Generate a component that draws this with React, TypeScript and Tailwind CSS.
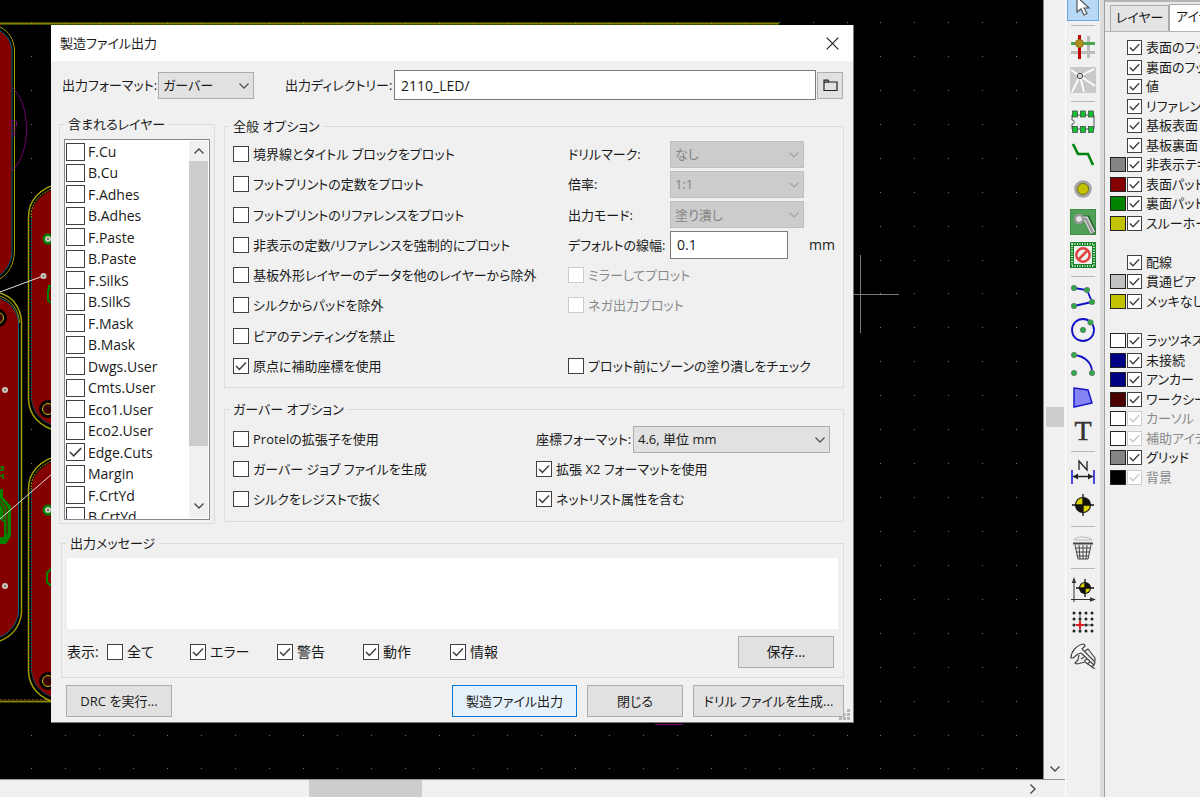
import React, { useId } from "react";

const FONT =
  "font-['Open_Sans','Noto_Sans_CJK_JP',sans-serif] [font-feature-settings:'palt']";

function Check({
  label,
  checked = false,
  disabled = false,
  variant = "form",
}: {
  label: string;
  checked?: boolean;
  disabled?: boolean;
  variant?: "form" | "list" | "panel";
}) {
  const size =
    variant === "list" ? "h-[18px] w-[19px]" : variant === "panel" ? "size-[15px]" : "size-4";
  const gap = variant === "list" ? "gap-[3px]" : "gap-1";
  return (
    <label
      className={`flex items-center whitespace-nowrap ${gap} ${disabled ? "text-[#8a8a8a]" : "text-[#1a1a1a]"}`}
    >
      <span className={`relative shrink-0 ${size}`}>
        <input
          type="checkbox"
          defaultChecked={checked}
          disabled={disabled}
          className={`peer block size-full appearance-none border bg-white ${disabled ? "border-[#cccccc]" : "border-[#404040]"}`}
        />
        <svg
          viewBox="0 0 16 16"
          className={`pointer-events-none absolute inset-0 hidden size-full peer-checked:block ${disabled ? "text-[#c8c8c8]" : "text-[#404040]"}`}
          fill="none"
          stroke="currentColor"
          strokeWidth="1.5"
        >
          <path d="M3 8l3.4 3.4L13 4.6" />
        </svg>
      </span>
      <span>{label}</span>
    </label>
  );
}

function Chevron({ className = "" }: { className?: string }) {
  return (
    <svg viewBox="0 0 12 8" className={`h-2 w-3 ${className}`} fill="none" stroke="currentColor">
      <path d="M1.500 1.500L6 6l4.500-4.500" strokeWidth="1.300" />
    </svg>
  );
}

function Drop({
  id,
  value,
  width,
  disabled = false,
}: {
  id: string;
  value: string;
  width: string;
  disabled?: boolean;
}) {
  return (
    <span className={`relative block shrink-0 ${width}`}>
      <select
        id={id}
        disabled={disabled}
        defaultValue={value}
        className={`block h-[27px] w-full appearance-none border pl-1 pr-5 leading-5 opacity-100 ${disabled ? "border-[#bfbfbf] bg-[#cccccc] text-[#838383]" : "border-[#adadad] bg-[#e1e1e1] text-[#1a1a1a]"}`}
      >
        <option>{value}</option>
      </select>
      <Chevron
        className={`pointer-events-none absolute right-1 top-[10px] ${disabled ? "text-[#a6a6a6]" : "text-[#555]"}`}
      />
    </span>
  );
}

function Group({
  title,
  className = "",
  inner = "",
  children,
}: {
  title: string;
  className?: string;
  inner?: string;
  children: React.ReactNode;
}) {
  return (
    <fieldset className={`min-w-0 border border-[#dcdcdc] ${className}`}>
      <legend className="ml-1 px-1 leading-5">{title}</legend>
      <div className={inner}>{children}</div>
    </fieldset>
  );
}

function PushButton({
  children,
  width,
  primary = false,
}: {
  children: React.ReactNode;
  width: string;
  primary?: boolean;
}) {
  return (
    <button
      type="button"
      className={`h-8 shrink-0 whitespace-nowrap border ${width} ${primary ? "border-[#0078d7] bg-[#e5f1fb]" : "border-[#adadad] bg-[#e1e1e1]"}`}
    >
      {children}
    </button>
  );
}

const layers = [
  "F.Cu", "B.Cu", "F.Adhes", "B.Adhes", "F.Paste", "B.Paste", "F.SilkS", "B.SilkS", "F.Mask",
  "B.Mask", "Dwgs.User", "Cmts.User", "Eco1.User", "Eco2.User", "Edge.Cuts", "Margin", "F.CrtYd",
  "B.CrtYd",
];

const plotOptions: [string, boolean][] = [
  ["境界線とタイトル ブロックをプロット", false],
  ["フットプリントの定数をプロット", false],
  ["フットプリントのリファレンスをプロット", false],
  ["非表示の定数/リファレンスを強制的にプロット", false],
  ["基板外形レイヤーのデータを他のレイヤーから除外", false],
  ["シルクからパッドを除外", false],
  ["ビアのテンティングを禁止", false],
  ["原点に補助座標を使用", true],
];

function PlotDialog() {
  const id = useId();
  return (
    <section
      role="dialog"
      aria-label="製造ファイル出力"
      className="absolute left-[51px] top-[25px] flex w-[803px] flex-col border-b border-r border-[#777] bg-[#f0f0f0] pb-[5px] text-[13px]"
    >
      <header className="flex h-9 items-center justify-between bg-white pl-[9px] pr-[14px]">
        <h1>製造ファイル出力</h1>
        <button type="button" aria-label="閉じる">
          <svg viewBox="0 0 13 13" className="size-[13px]" stroke="#222" strokeWidth="1.200">
            <path d="M.7.7l11.600 11.600M12.300.7L.7 12.300" />
          </svg>
        </button>
      </header>

      <div className="flex h-12 items-center pl-[11px] pr-[10px]">
        <label htmlFor={id + "f"} className="w-[96px] shrink-0 whitespace-nowrap">出力フォーマット:</label>
        <Drop id={id + "f"} value="ガーバー" width="w-[96px]" />
        <label htmlFor={id + "d"} className="ml-[31px] w-[109px] shrink-0 whitespace-nowrap">出力ディレクトリー:</label>
        <input
          id={id + "d"}
          defaultValue="2110_LED/"
          className="h-[30px] min-w-0 flex-1 border border-[#7a7a7a] bg-white px-[6px] text-[14px]"
        />
        <button
          type="button"
          aria-label="参照"
          className="ml-px flex h-[27px] w-[26px] items-center justify-center border border-[#adadad] bg-[#e1e1e1]"
        >
          <svg viewBox="0 0 15 13" className="h-[13px] w-[15px]" fill="none" stroke="#222" strokeWidth="1.200">
            <path d="M1 11.500V1.200h4l1.200 1.800H14v8.500zM1 3.200h5" />
          </svg>
        </button>
      </div>

      <div className="flex gap-[9px] pl-2 pr-[9px] pt-[5px]">
        <Group title="含まれるレイヤー" className="w-[156px] shrink-0" inner="px-1 pb-[3px]">
          <div className="mt-[5px] flex h-[381px] overflow-hidden border border-[#828790] bg-white">
            <ul className="flex h-[387px] min-w-0 flex-1 flex-col justify-between pl-px pt-px text-[14px]">
              {layers.map((l) => (
                <li key={l} className="h-[21px] leading-[21px]">
                  <Check label={l} checked={l === "Edge.Cuts"} variant="list" />
                </li>
              ))}
            </ul>
            <div className="m-px flex w-[19px] flex-col items-center bg-[#f0f0f0] text-[#444]">
              <Chevron className="my-[6px] shrink-0 rotate-180" />
              <div className="h-[285px] w-full bg-[#cdcdcd]" />
              <Chevron className="mb-2 mt-auto shrink-0" />
            </div>
          </div>
        </Group>

        <div className="flex min-w-0 flex-1 flex-col gap-[11px] pt-[2px]">
          <Group title="全般 オプション" inner="pb-[7px] pl-2">
            <div className="mt-1 flex h-[240px]">
              <div className="flex w-[335px] shrink-0 flex-col justify-between">
                {plotOptions.map(([label, on]) => (
                  <div key={label} className="flex h-7 items-center">
                    <Check label={label} checked={on} />
                  </div>
                ))}
              </div>
              <div className="flex flex-1 flex-col justify-between">
                {[
                  ["ドリルマーク:", "なし"],
                  ["倍率:", "1:1"],
                  ["出力モード:", "塗り潰し"],
                ].map(([label, value]) => (
                  <div key={label} className="flex h-7 items-center">
                    <label htmlFor={id + label} className="w-[102px] shrink-0 whitespace-nowrap">{label}</label>
                    <Drop id={id + label} value={value} width="w-[134px]" disabled />
                  </div>
                ))}
                <div className="flex h-7 items-center">
                  <label htmlFor={id + "w"} className="w-[102px] shrink-0 whitespace-nowrap">デフォルトの線幅:</label>
                  <input
                    id={id + "w"}
                    defaultValue="0.1"
                    className="h-7 w-[118px] border border-[#7a7a7a] bg-white px-[6px] text-[14px]"
                  />
                  <span className="ml-[21px] text-[14px]">mm</span>
                </div>
                <div className="flex h-7 items-center">
                  <Check label="ミラーしてプロット" disabled />
                </div>
                <div className="flex h-7 items-center">
                  <Check label="ネガ出力プロット" disabled />
                </div>
                <div className="h-7" />
                <div className="flex h-7 items-center">
                  <Check label="プロット前にゾーンの塗り潰しをチェック" />
                </div>
              </div>
            </div>
          </Group>

          <Group title="ガーバー オプション" inner="pb-[6px] pl-2">
            <div className="mt-[6px] flex h-[90px]">
              <div className="flex w-[303px] shrink-0 flex-col gap-[2px]">
                {["Protelの拡張子を使用", "ガーバー ジョブ ファイルを生成", "シルクをレジストで抜く"].map((l) => (
                  <div key={l} className="flex h-7 items-center">
                    <Check label={l} />
                  </div>
                ))}
              </div>
              <div className="flex flex-1 flex-col gap-[2px]">
                <div className="flex h-7 items-center">
                  <label htmlFor={id + "c"} className="w-[97px] shrink-0 whitespace-nowrap">座標フォーマット:</label>
                  <Drop id={id + "c"} value="4.6, 単位 mm" width="w-[197px]" />
                </div>
                <div className="flex h-7 items-center">
                  <Check label="拡張 X2 フォーマットを使用" checked />
                </div>
                <div className="flex h-7 items-center">
                  <Check label="ネットリスト属性を含む" checked />
                </div>
              </div>
            </div>
          </Group>
        </div>
      </div>

      <Group title="出力メッセージ" className="ml-[10px] mr-[9px] mt-[9px]" inner="px-[5px] pb-[9px]">
        <textarea
          aria-label="出力メッセージ"
          className="mt-[5px] block h-[71px] w-full resize-none bg-white"
        />
        <div className="mt-[7px] flex h-8 items-center text-[14px]">
          <span className="w-[40px] shrink-0">表示:</span>
          <div className="w-[83px]"><Check label="全て" /></div>
          <div className="w-[87px]"><Check label="エラー" checked /></div>
          <div className="w-[86px]"><Check label="警告" checked /></div>
          <div className="w-[87px]"><Check label="動作" checked /></div>
          <Check label="情報" checked />
          <div className="ml-auto mr-1">
            <PushButton width="w-24">保存...</PushButton>
          </div>
        </div>
      </Group>

      <footer className="mt-[7px] flex gap-[10px] pl-[15px] pr-[9px]">
        <PushButton width="w-[106px]">DRC を実行...</PushButton>
        <div className="flex-1" />
        <PushButton width="w-[125px]" primary>製造ファイル出力</PushButton>
        <PushButton width="w-24">閉じる</PushButton>
        <PushButton width="w-[151px]">ドリル ファイルを生成...</PushButton>
      </footer>
      <svg className="absolute bottom-px right-[2px] size-3" fill="#b5b5b5">
        {[[8, 0], [4, 4], [8, 4], [0, 8], [4, 8], [8, 8]].map(([x, y]) => (
          <rect key={`${x}-${y}`} x={x} y={y} width="3" height="3" />
        ))}
      </svg>
    </section>
  );
}

function Pad({ x, y, ring = false }: { x: number; y: number; ring?: boolean }) {
  return (
    <g>
      {ring && <circle cx={x} cy={y} r="5.500" fill="#008400" />}
      <circle cx={x} cy={y} r="3" fill="#c9c9c9" />
      <circle cx={x} cy={y} r="1.200" fill="#8a7a50" />
    </g>
  );
}

function Hole({ x, y }: { x: number; y: number }) {
  return (
    <g>
      <circle cx={x} cy={y} r="9" fill="#000" />
      <circle cx={x} cy={y} r="5.500" fill="#3a0000" stroke="#c2c200" />
    </g>
  );
}

function Board() {
  const dots = [];
  for (let i = 0; i < 30; i++)
    for (let j = 0; j < 23; j++)
      dots.push(
        <rect key={`${i}-${j}`} x={Math.round(31 + i * 33.98)} y={Math.round(22 + j * 33.93)} width="1" height="1" />
      );
  const red = "#840000";
  const olive = "#a0a000";
  return (
    <svg className="absolute inset-0 size-full" fill="none">
      <g fill="#777">{dots}</g>
      <path d="M0 23.500H779" stroke="#848400" strokeWidth="2" />
      <path d="M0 24.500H779" stroke="#a03000" strokeDasharray="1 3" />
      <path d="M2 24.500H779" stroke="#008400" strokeDasharray="1 3" />
      <path d="M0 701.500H60" stroke="#848400" strokeWidth="2" />
      <path d="M0 699.500H60" stroke="#843000" strokeDasharray="2 2" />

      <path d="M0 31C7 35 11 42 11.500 50V252C11 262 7 270 0 275z" fill={red} />
      <path d="M0 31C7 35 11.500 42 12 50V252C11.500 262 7 270 0 275" stroke="#006878" />
      <path d="M0 27C9 31 14 40 14.500 50V252C14 264 9 273 0 279" stroke={olive} />
      <path d="M12 87C22 97 26.500 112 26.500 129S22 161 12 171" stroke="#700070" />
      <path d="M11.500 121h5v5h-5zM11.500 129h5M11.500 134h5M14 131v6" stroke="#700070" />

      <path d="M0 298C11 302 18 312 18.500 324V613C17 624 10 633 0 637z" fill={red} />
      <path d="M0 298C11 302 18 312 18.500 324V613C17 624 10 633 0 637" stroke="#006878" />
      <path d="M0 293C13 297 21 308 21.500 322V613C20 626 12 636 0 641" stroke={olive} strokeWidth="1.500" />
      <path d="M0 296C11 300 19 310 19.500 323" stroke={olive} />

      {[[185, 430], [457, 702]].map(([t, b]) => (
        <g key={t}>
          <path d={`M60 ${t + 2}C42 ${t + 7} 32 ${t + 18} 31 ${t + 32}V${b - 33}C32 ${b - 18} 42 ${b - 6} 60 ${b - 3}z`} fill={red} />
          <path d={`M31.500 ${t + 32}V${b - 33}C32 ${b - 18} 42 ${b - 6} 60 ${b - 3}`} stroke="#006878" strokeDasharray="2 1" />
          <path d={`M60 ${t - 2}C40 ${t + 3} 28.500 ${t + 15} 28.500 ${t + 32}V${b - 31}C29 ${b - 14} 40 ${b - 3} 60 ${b + 2}`} stroke={olive} strokeWidth="1.500" />
          <path d={`M60 ${t + 1}C42 ${t + 6} 31 ${t + 16} 31 ${t + 32}`} stroke={olive} strokeDasharray="2 1" />
        </g>
      ))}

      <path d="M51 286h-2v4h-1v10l3 3M51 569l-4 4v9l4 4" stroke="#008400" strokeWidth="2" />
      <path d="M0 467h3v3h-3M0 476l3-1v4" stroke="#009000" strokeWidth="1.500" />
      <path d="M0 489h3v8l8 9v30l-5 8H0v-7h4v-14l-4-4z" fill="#008400" />
      <path d="M0 499l7 8v27M0 503l4 5v12M0 522h3v6H0" stroke="#840000" />
      <path d="M0 292L43 276M0 519L52 474" stroke="#e0e0e0" />
      <Hole x={48} y={409} />
      <Hole x={48} y={681} />
      <Hole x={-2} y={318} />
      <Pad x={48} y={239} ring />
      <Pad x={43.5} y={276} />
      <Pad x={48} y={510} ring />
      <Pad x={5} y={390} />
      <Pad x={5} y={586} />

      <path d="M860.500 255v78M853 294.500h46" stroke="#7a7a7a" />
      <path d="M655 724.500h28" stroke="#700070" />
    </svg>
  );
}

function Target({ x = 13, y = 13, r = 8 }: { x?: number; y?: number; r?: number }) {
  return (
    <g>
      <circle cx={x} cy={y} r={r} fill="#111" />
      <path
        d={`M${x} ${y}V${y - r + 1}A${r - 1} ${r - 1} 0 0 0 ${x - r + 1} ${y}zM${x} ${y}V${y + r - 1}A${r - 1} ${r - 1} 0 0 0 ${x + r - 1} ${y}z`}
        fill="#d8d000"
      />
      <path d={`M${x} ${y - r - 3}v${2 * r + 6}M${x - r - 3} ${y}h${2 * r + 6}`} stroke="#111" strokeWidth="1.300" />
    </g>
  );
}

const node = (x: number, y: number) => (
  <circle key={`${x}-${y}`} cx={x} cy={y} r="2.700" fill="#2fa84a" stroke="#66806a" strokeWidth=".8" />
);

const tools: ({ name: string; art: React.ReactNode } | null)[] = [
  {
    name: "ネットをハイライト",
    art: (
      <g strokeWidth="3">
        <path d="M18.500 2v22M1 18.500h24" stroke="#bbb" />
        <path d="M9.500 1v24" stroke="#c00000" />
        <path d="M1 9.500h24" stroke="#4aa54f" />
        <circle cx="9.500" cy="9.500" r="4" fill="#ad8f20" stroke="#8b7320" strokeWidth="1" />
      </g>
    ),
  },
  {
    name: "ローカルラッツネスト",
    art: (
      <g>
        <rect width="26" height="26" rx="1.500" fill="#c9c9c9" />
        <path d="M10 9L1 3M10 9L24 2M10 9l15 10M10 9L2 25M10 9l4 16" stroke="#fff" strokeWidth="1.800" />
        <circle cx="10" cy="9" r="2.600" fill="#ddd" stroke="#444" />
      </g>
    ),
  },
  null,
  {
    name: "フットプリントを追加",
    art: (
      <g>
        <path d="M2 6h22v14H2v-5c3 0 3-4 0-4z" fill="#f0f0f0" stroke="#555" />
        {[2.5, 10.5, 18.5].map((x) => (
          <g key={x} fill="#10c030" stroke="#444" strokeWidth=".7">
            <rect x={x} y="2" width="5" height="6" />
            <rect x={x} y="17.500" width="5" height="6" />
          </g>
        ))}
      </g>
    ),
  },
  { name: "配線", art: <path d="M3 2l5 10h10l5 11" stroke="#008410" strokeWidth="2.600" /> },
  {
    name: "ビアを追加",
    art: (
      <g>
        <circle cx="13" cy="13" r="7" fill="#c2c200" stroke="#a3a3a3" strokeWidth="3.500" />
        <circle cx="13" cy="13" r="5.500" stroke="#777700" />
      </g>
    ),
  },
  {
    name: "塗り潰しゾーンを追加",
    art: (
      <g>
        <rect width="26" height="26" fill="#52a058" stroke="#2e8038" />
        <path d="M9 10h8l7 15" stroke="#2b6c32" strokeWidth="7" />
        <path d="M9 10h7l7 14" stroke="#ddd" strokeWidth="5" />
        <path d="M9 10h7l7 14" stroke="#999" strokeWidth="2.500" />
        <circle cx="9" cy="10" r="4" fill="#e8e8e8" stroke="#999" strokeWidth="2.500" />
      </g>
    ),
  },
  {
    name: "キープアウトエリアを追加",
    art: (
      <g>
        <rect width="26" height="26" fill="#178528" />
        <rect x="2" y="2" width="22" height="22" stroke="#d5ecd5" strokeWidth="2" strokeDasharray="1 1.500" />
        <rect x="4" y="4" width="18" height="18" fill="#eef3ee" />
        <circle cx="13" cy="13" r="6.700" stroke="#e04040" strokeWidth="2.500" />
        <path d="M8.500 17.500l9-9" stroke="#e04040" strokeWidth="2.500" />
      </g>
    ),
  },
  null,
  {
    name: "図形ライン",
    art: <g><path d="M4 4l13 2 5 12-18 4" stroke="#1010c8" strokeWidth="1.800" />{node(4, 4)}{node(17, 6)}{node(22, 18)}{node(4, 22)}</g>,
  },
  {
    name: "円",
    art: <g><circle cx="13" cy="13" r="11" stroke="#1010c8" strokeWidth="1.800" />{node(13, 13)}{node(20.5, 5.5)}</g>,
  },
  {
    name: "円弧",
    art: <g><path d="M4 4C15 5 22 12 22 21" stroke="#1010c8" strokeWidth="1.800" />{node(4, 4)}{node(4, 22)}{node(22, 22)}</g>,
  },
  {
    name: "ポリゴン",
    art: <path d="M4 4l14 2 4 13-18 4z" fill="#8585f5" stroke="#1818cc" strokeWidth="1.500" />,
  },
  {
    name: "テキスト",
    art: <text x="13" y="23" textAnchor="middle" fontSize="28" fill="#333" stroke="#333" strokeWidth=".5" fontFamily="'Liberation Serif', serif">T</text>,
  },
  null,
  {
    name: "寸法",
    art: (
      <g>
        <path d="M2 11v14M24 11v14" stroke="#1010c8" strokeWidth="1.500" />
        <path d="M3 17.500h20M9 11V2l8 9V2" stroke="#222" strokeWidth="1.300" />
        <path d="M3 17.500l5-3v6zM23 17.500l-5-3v6z" fill="#222" />
      </g>
    ),
  },
  { name: "層合わせマーク", art: <Target /> },
  null,
  {
    name: "削除",
    art: (
      <g stroke="#444">
        <path d="M4 5c0-2 3-1 4-3 2 1 4-1 6 0s4 0 5 1 2 0 3 2z" fill="#eee" stroke="#bbb" />
        <path d="M3 8.500h20" strokeWidth="2" />
        <path d="M5 10l3 14h10l3-14M9 10l1 14M13 10v14M17 10l-1 14M5 13h16M6 17h14M7 21h12" />
      </g>
    ),
  },
  null,
  {
    name: "原点",
    art: (
      <g>
        <path d="M4 25V4M1 22.500h20" stroke="#333" />
        <path d="M4 0L1.800 6h4.400zM26 22.500l-6-2.200v4.400z" fill="#333" />
        <Target x={15} y={11} r={6} />
      </g>
    ),
  },
  {
    name: "グリッド原点",
    art: (
      <g>
        {[4, 10, 16, 22].flatMap((x) =>
          [3, 9, 15, 21].map((y) => <circle key={`${x}-${y}`} cx={x} cy={y} r="1.500" fill="#222" />)
        )}
        <path d="M10 3v20M8 15h14" stroke="#333" strokeWidth=".8" />
        <path d="M10 11v8M6 15h8" stroke="#e02020" strokeWidth="2" />
      </g>
    ),
  },
  {
    name: "計測",
    art: (
      <g stroke="#444" strokeWidth="1.200" strokeLinejoin="round">
        <path d="M1 15C1 9 6 2 14 1l1 2-3 3 13 13-1 3L11 10l-3 1-5 4z" fill="#f4f4f4" />
        <path d="M15 8l3-2 7 9v3M9 12l-1 5-3 3 2 1 8-2 10 7" />
        <path d="M14 14l-3 2M17 16l-3 2M20 19l-3 2M24 22l-3 2" />
      </g>
    ),
  },
];

function Separator() {
  return (
    <div className="flex h-[9px] w-6 shrink-0 items-center">
      <div className="h-px w-full bg-[#b8b8b8]" />
    </div>
  );
}

function Toolbar() {
  return (
    <nav className="w-[35px] shrink-0 border-l border-white">
      <div className="flex h-[673px] flex-col items-center justify-between">
        <button
          type="button"
          aria-label="選択"
          className="flex h-[21px] w-8 justify-center border border-t-0 border-[#66a7e0] bg-[#b8d9f5]"
        >
          <svg viewBox="0 0 16 16" className="size-4" fill="#fff" stroke="#555" strokeWidth="1.200">
            <path d="M2-3v15l4-3 3 6 3-1.500-3-5.500h5z" />
          </svg>
        </button>
        <Separator />
        {tools.map((t, i) =>
          t ? (
            <button key={t.name} type="button" aria-label={t.name} className="flex h-[33px] items-center">
              <svg viewBox="0 0 26 26" className="size-[26px]" fill="none">{t.art}</svg>
            </button>
          ) : (
            <Separator key={i} />
          )
        )}
      </div>
    </nav>
  );
}

type Item = { label: string; color?: string; off?: boolean } | null;
const items: Item[] = [
  { label: "表面のフット" },
  { label: "裏面のフット" },
  { label: "値" },
  { label: "リファレンス" },
  { label: "基板表面" },
  { label: "基板裏面" },
  { label: "非表示テキ", color: "bg-[#848484]" },
  { label: "表面パッド", color: "bg-[#840000]" },
  { label: "裏面パッド", color: "bg-[#008400]" },
  { label: "スルーホール", color: "bg-[#c2c200]" },
  null,
  { label: "配線" },
  { label: "貫通ビア", color: "bg-[#c2c2c2]" },
  { label: "メッキなし", color: "bg-[#c2c200]" },
  null,
  { label: "ラッツネスト", color: "bg-white" },
  { label: "未接続", color: "bg-[#000084]" },
  { label: "アンカー", color: "bg-[#000084]" },
  { label: "ワークシート", color: "bg-[#480000]" },
  { label: "カーソル", color: "bg-white", off: true },
  { label: "補助アイテ", color: "bg-white", off: true },
  { label: "グリッド", color: "bg-[#848484]" },
  { label: "背景", color: "bg-black", off: true },
];

function ItemsPanel() {
  return (
    <aside className="w-[100px] shrink-0 overflow-hidden border-l-4 border-[#dcdcdc] text-[13px]">
      <div className="min-h-screen border-l border-[#a0a0a0]">
        <div className="flex h-8 items-end border-b border-t-2 border-[#b5b5b5] bg-[#e8e8e8] pl-[5px]">
          <button type="button" className="h-[26px] w-[59px] shrink-0 border border-b-0 border-[#aaa] bg-[#e4e4e4] pb-1">
            レイヤー
          </button>
          <button type="button" className="h-[27px] w-[70px] shrink-0 whitespace-nowrap border border-b-0 border-[#aaa] bg-white pb-1 pl-[6px] text-left">
            アイテム
          </button>
        </div>
        <ul className="mt-[6px] flex h-[449px] flex-col justify-between pl-[5px]">
          {items.map((it, i) => (
            <li key={i} className="flex h-[19px] items-center gap-px leading-[19px]">
              {it && (
                <>
                  <span className={`h-[15px] w-4 shrink-0 ${it.color ? `border border-[#222] ${it.color}` : ""}`} />
                  <Check label={it.label} checked disabled={it.off} variant="panel" />
                </>
              )}
            </li>
          ))}
        </ul>
      </div>
    </aside>
  );
}

export default function App() {
  return (
    <div className={`flex min-h-screen overflow-hidden bg-[#f0f0f0] text-[14px] leading-5 text-[#1a1a1a] ${FONT}`}>
      <main className="flex min-w-0 flex-1 flex-col">
        <div className="flex flex-1">
          <div className="relative min-w-0 flex-1 overflow-hidden bg-black">
            <Board />
            <PlotDialog />
          </div>
          <div className="flex w-[22px] shrink-0 flex-col items-center border-l border-[#888] pb-[6px] text-[#444]">
            <div className="mt-[407px] h-5 w-[18px] bg-[#cdcdcd]" />
            <Chevron className="mt-auto" />
          </div>
        </div>
        <div className="flex h-[18px] items-center border-t border-[#999] pr-[26px] text-[#444]">
          <div className="ml-[309px] h-full w-[113px] bg-[#cdcdcd]" />
          <Chevron className="ml-auto -rotate-90" />
        </div>
      </main>
      <Toolbar />
      <ItemsPanel />
    </div>
  );
}
